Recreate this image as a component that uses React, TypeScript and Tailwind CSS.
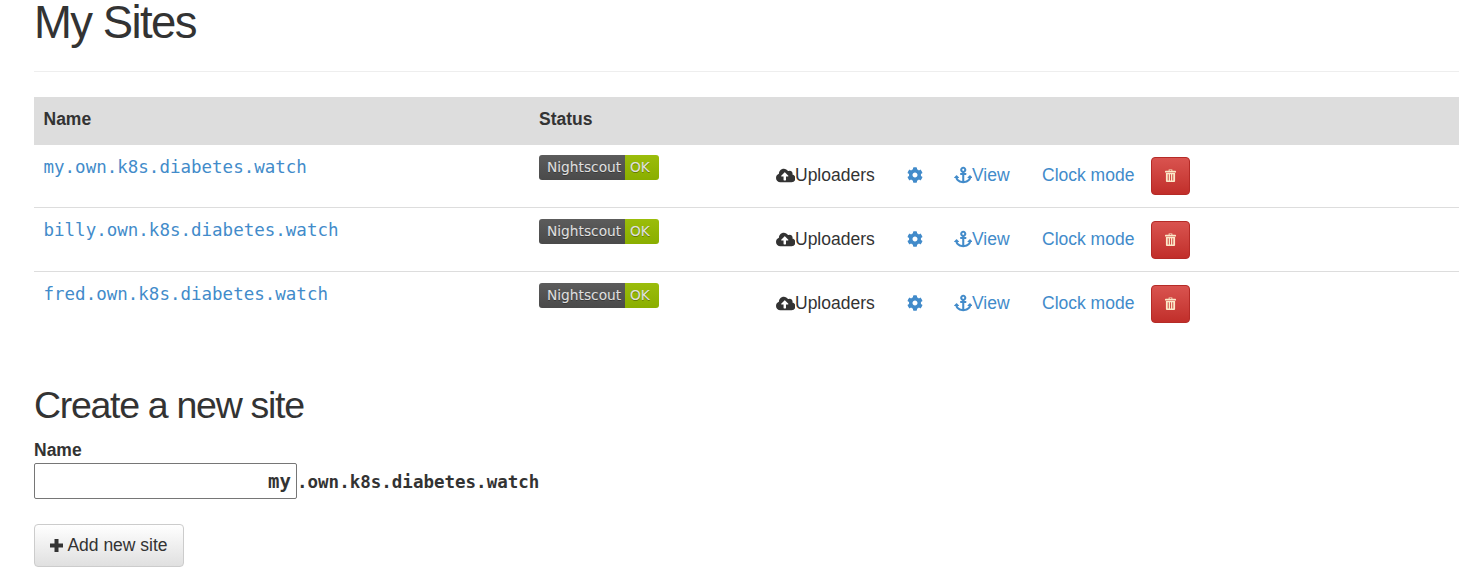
import React from "react";
import { FaCloudUploadAlt, FaCog, FaAnchor } from "react-icons/fa";

const sites = ["my", "billy", "fred"];

function TrashIcon() {
  return (
    <svg viewBox="0 0 12 14" className="mb-[1px] h-[13px] w-[11px]" fill="currentColor">
      <path d="M4 0.5h4v1.3h3.2a.8.8 0 0 1 .8.8v1H0v-1a.8.8 0 0 1 .8-.8H4zM5 1v.8h2V1z" fillRule="evenodd" />
      <path d="M1 4.2h10V13a1 1 0 0 1-1 1H2a1 1 0 0 1-1-1zM3 5.5v7h1v-7zM5.5 5.5v7h1v-7zM8 5.5v7h1v-7z" fillRule="evenodd" />
    </svg>
  );
}

function PlusIcon() {
  return (
    <svg viewBox="0 0 13 13" className="h-[13px] w-[13px]" fill="currentColor">
      <path d="M4.5 0h4v4.5H13v4H8.500V13h-4V8.500H0v-4h4.500z" />
    </svg>
  );
}

function Row({ name, first }: { name: string; first: boolean }) {
  return (
    <tr className="border-b border-[#ddd] last:border-b-0">
      <td className="w-[495.5px] pl-[9.5px] pt-[10px] align-top font-['DejaVu_Sans_Mono',monospace] text-[17.5px] leading-[25px] text-[#428bca]">
        {name}.own.k8s.diabetes.watch
      </td>
      <td className={first ? "w-[246px] pl-[9.5px] pt-[10px] align-top" : "w-[246px] pl-[9.5px] pt-[11px] align-top"}>
        <div className="flex h-[25px] w-[120px] overflow-hidden rounded-[3px] font-['DejaVu_Sans',sans-serif] text-[13.75px] leading-[25px] text-[#e0e0e0] [text-shadow:0_1px_0_rgba(0,0,0,0.3)]">
          <span className="w-[86px] bg-gradient-to-b from-[#5c5c5c] to-[#4a4a4a] pl-[8px]">Nightscout</span>
          <span className="flex-1 bg-gradient-to-b from-[#9bbd0b] to-[#8aae00] pl-[5px]">OK</span>
        </div>
      </td>
      <td className={first ? "pt-[12px] pb-[12px] align-top" : "pt-[13px] pb-[12px] align-top"}>
        <div className="flex h-[38px] items-center text-[#333]">
          <a className="flex w-[131px] items-center pb-[2px]">
            <FaCloudUploadAlt className="h-[19px] w-[19.500px]" />
            Uploaders
          </a>
          <a className="flex w-[47px] items-center pb-[2px] text-[#428bca]">
            <FaCog className="h-[16px] w-[16px]" />
          </a>
          <a className="flex w-[88.5px] items-center pb-[2px] text-[#428bca]">
            <FaAnchor className="h-[18px] w-[18.500px]" />
            View
          </a>
          <a className="w-[108.5px] pb-[2px] text-[#428bca]">Clock mode</a>
          <button className="flex h-[38px] w-[39px] items-center justify-center rounded-[4px] border border-[#b52b27] bg-gradient-to-b from-[#d9534f] to-[#c12e2a] text-[#fbe9c8]">
            <TrashIcon />
          </button>
        </div>
      </td>
    </tr>
  );
}

export default function App() {
  return (
    <div className="h-[588px] overflow-hidden bg-white pl-[34px] pr-[14px] font-['Liberation_Sans',Arial,sans-serif] text-[17.5px] leading-[25px] text-[#333]">
      <div className="border-b border-[#eee] pb-[25px]">
        <h1 className="h-[46px] text-[45.5px] leading-[46px] tracking-[-1.55px]">My Sites</h1>
      </div>
      <table className="mt-[25px] w-full border-collapse text-left">
        <thead>
          <tr className="h-[48px] bg-[#ddd]">
            <th className="pl-[9.5px] pb-[4px] font-bold">Name</th>
            <th className="pl-[9.5px] pb-[4px] font-bold">Status</th>
            <th />
          </tr>
        </thead>
        <tbody>
          {sites.map((s, i) => (
            <Row key={s} name={s} first={i === 0} />
          ))}
        </tbody>
      </table>
      <h2 className="mt-[48px] text-[37.5px] leading-[44px] tracking-[-1.3px]">Create a new site</h2>
      <form>
        <label className="mt-[11px] block font-bold">Name</label>
        <div className="flex items-center">
          <div className="flex h-[36px] w-[263px] items-center justify-end rounded-[2px] border border-[#767676] pr-[5px] font-['DejaVu_Sans_Mono',monospace] text-[19px] font-bold">
            my
          </div>
          <span className="pt-[2px] font-['DejaVu_Sans_Mono',monospace] text-[17.5px] font-bold">.own.k8s.diabetes.watch</span>
        </div>
        <button type="button" className="mt-[25px] flex h-[43px] w-[150px] items-center justify-center gap-[4px] rounded-[4px] border border-[#ccc] bg-gradient-to-b from-white to-[#e0e0e0]">
          <PlusIcon />
          Add new site
        </button>
      </form>
    </div>
  );
}
